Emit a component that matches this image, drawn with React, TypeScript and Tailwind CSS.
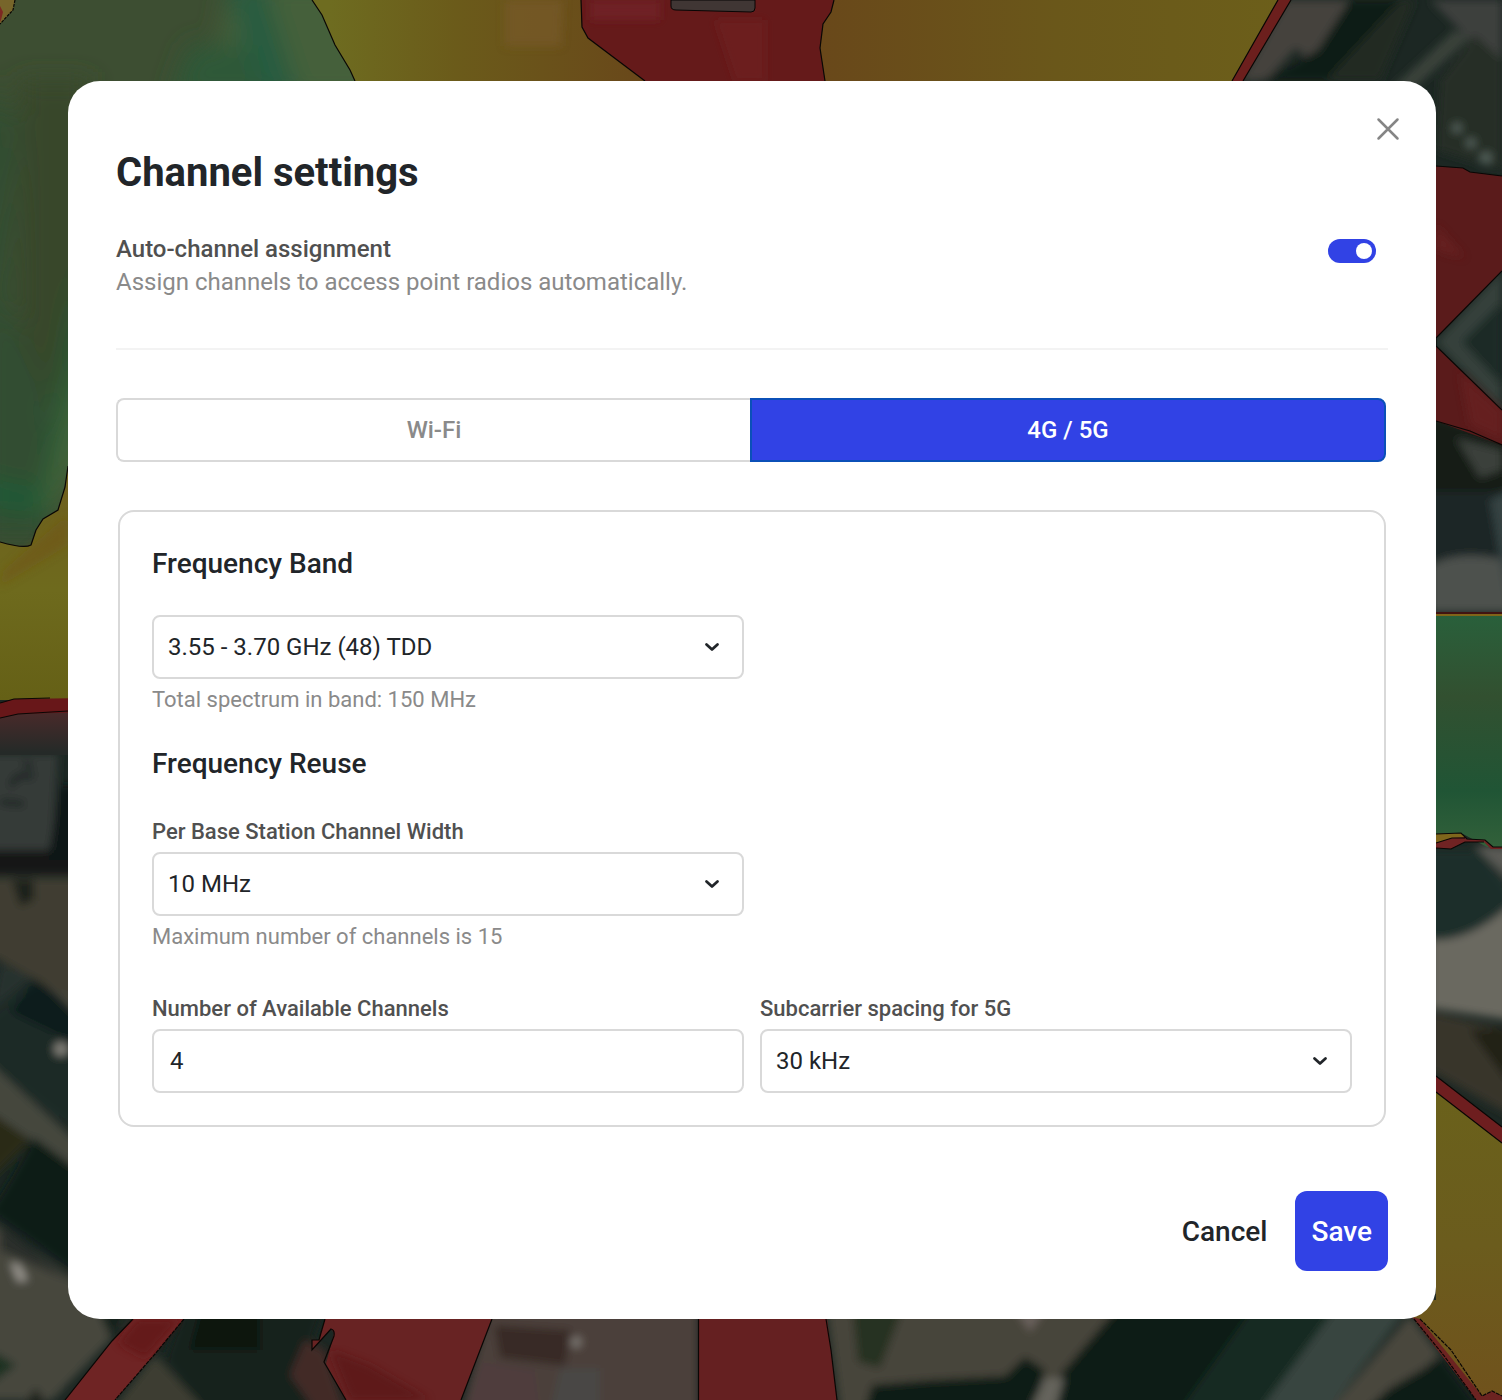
import { useState } from "react";
import type { ReactNode } from "react";

function CoverageMap() {
  return (
    <svg
      className="absolute inset-0 h-full w-full"
      viewBox="0 0 1502 1400"
      preserveAspectRatio="xMidYMid slice"
      aria-hidden="true"
    >
      <defs>
        <filter id="soft" x="-10%" y="-10%" width="120%" height="120%">
          <feGaussianBlur stdDeviation="4" />
        </filter>
        <filter id="haze" x="-20%" y="-20%" width="140%" height="140%">
          <feGaussianBlur stdDeviation="12" />
        </filter>
        <linearGradient id="ochreA" x1="330" x2="640" y1="0" y2="0" gradientUnits="userSpaceOnUse">
          <stop offset="0" stopColor="#6e6c20" />
          <stop offset="0.4" stopColor="#6b5b1a" />
          <stop offset="1" stopColor="#69481a" />
        </linearGradient>
        <linearGradient id="ochreB" x1="820" x2="1290" y1="0" y2="0" gradientUnits="userSpaceOnUse">
          <stop offset="0" stopColor="#69481a" />
          <stop offset="0.5" stopColor="#6a571a" />
          <stop offset="1" stopColor="#6c5f1a" />
        </linearGradient>
        <linearGradient id="leftYellow" x1="0" x2="0" y1="480" y2="700" gradientUnits="userSpaceOnUse">
          <stop offset="0" stopColor="#6e5f1d" />
          <stop offset="0.5" stopColor="#6e6a1d" />
          <stop offset="1" stopColor="#656016" />
        </linearGradient>
        <linearGradient id="fade" x1="0" x2="0" y1="710" y2="752" gradientUnits="userSpaceOnUse">
          <stop offset="0" stopColor="#4b2a2a" />
          <stop offset="1" stopColor="#252a28" />
        </linearGradient>
        <linearGradient id="rightGreen" x1="0" x2="0" y1="614" y2="850" gradientUnits="userSpaceOnUse">
          <stop offset="0" stopColor="#29603b" />
          <stop offset="0.35" stopColor="#325030" />
          <stop offset="0.75" stopColor="#205535" />
          <stop offset="1" stopColor="#33613a" />
        </linearGradient>
        <linearGradient id="rightYellow" x1="0" x2="0" y1="1090" y2="1400" gradientUnits="userSpaceOnUse">
          <stop offset="0" stopColor="#6a611b" />
          <stop offset="0.5" stopColor="#6b5c1d" />
          <stop offset="1" stopColor="#70521c" />
        </linearGradient>
        <clipPath id="greenClip">
          <path d="M0 0H312L322 15L335 45L350 70L355 81V300L68 466L65 487L58 510L43 519L36 530L31 545L24 547L0 542Z" />
        </clipPath>
      </defs>

      <rect width="1502" height="1400" fill="#1c2723" />

      <g filter="url(#soft)">
        <path d="M1286 0H1350L1310 62L1296 48L1266 81H1240Z" fill="#44433c" />
        <path d="M1350 0H1400L1330 81H1262L1318 50Z" fill="#101b18" />
        <path d="M1400 0H1415L1380 81H1325Z" fill="#222c24" />
        <path d="M1455 30L1470 38L1412 90H1390Z" fill="#3b423b" />
        <path d="M1430 0H1502V78L1480 50Z" fill="#3c3f3c" />
        <path d="M1440 80L1475 35L1502 60V170L1436 150Z" fill="#252e25" />
        <circle cx="1457" cy="128" r="5" fill="#53605a" />
        <circle cx="1471" cy="143" r="5" fill="#53605a" />
        <circle cx="1486" cy="158" r="6" fill="#53605a" />
        <path d="M1436 342L1502 270V412Z" fill="#35403b" />
        <path d="M1462 342L1502 302V385Z" fill="#1b2926" />
        <path d="M1430 415L1510 440V500H1430Z" fill="#131d18" />
        <path d="M1456 438L1502 450V470L1480 478Z" fill="#3a403a" />
        <path d="M1430 492H1510V560H1430Z" fill="#1b2728" />
        <path d="M1430 565Q1465 548 1510 562V612H1430Z" fill="#4d514d" />
        <path d="M1490 500L1510 490V610Z" fill="#354242" />
        <path d="M1430 850H1480L1510 890V930L1450 950H1430Z" fill="#1b2d2b" />
        <path d="M1475 846H1510V882Z" fill="#5a5a54" />
        <path d="M1430 940Q1470 942 1510 905V1020L1430 1008Z" fill="#6b6961" />
        <path d="M1430 1012L1510 1030V1115L1430 1070Z" fill="#39352c" />
        <path d="M1470 1030L1510 1028V1085Z" fill="#232419" />

        <path d="M-10 754H58L52 850H-10Z" fill="#353a38" />
        <path d="M-10 850H78V874H-10Z" fill="#121715" />
        <path d="M60 785H78V860H48Z" fill="#101916" />
        <path d="M10 786L18 776H34M0 802L24 804M24 762L32 768" stroke="#151d1c" strokeWidth="5" fill="none" />
        <path d="M-10 878H78V1010L40 982L-10 955Z" fill="#403c31" />
        <path d="M12 880H34V900L20 906Z" fill="#1d211a" />
        <path d="M0 963L32 978L-10 1012Z" fill="#26302f" />
        <path d="M36 980L78 1010V1135L-10 1065V1015Z" fill="#1a2926" />
        <path d="M36 980L78 1012V1045L10 1012Z" fill="#101f1b" />
        <path d="M46 984L78 1000V1016Z" fill="#45443b" />
        <circle cx="61" cy="1049" r="7" fill="#817f78" />
        <path d="M-10 1063L78 1142V1172L-10 1112Z" fill="#45463d" />
        <path d="M-10 1112L30 1140L-10 1180Z" fill="#2b2b18" />
        <path d="M34 1138L78 1170V1275L-10 1212L10 1180Z" fill="#101e19" />
        <path d="M-10 1222L68 1275L110 1319H130L52 1400H-10Z" fill="#46473d" />
        <path d="M0 1225L68 1280L0 1250Z" fill="#292f2b" />
        <path d="M10 1262L20 1265L28 1280L18 1282Z" fill="#96938c" />
        <path d="M-10 1350L16 1365L-10 1385Z" fill="#1c3024" />
        <path d="M20 1410L36 1388L50 1410Z" fill="#1d211c" />

        <path d="M98 1310H132L112 1340Z" fill="#14221e" />
        <path d="M185 1305H290L325 1305L300 1375L350 1410H205L165 1360Z" fill="#13221e" />
        <path d="M155 1355L205 1410H112Z" fill="#3c3d32" />
        <path d="M202 1305H260V1350L190 1350Z" fill="#0a1411" />
        <path d="M305 1340L325 1350L345 1410H315L290 1375Z" fill="#432b28" />
        <path d="M490 1305H698V1410H462Z" fill="#4b403a" />
        <path d="M494 1325L572 1330L565 1366L500 1358Z" fill="#392a26" />
        <path d="M482 1362L535 1372L540 1410H465Z" fill="#4f3e3e" />
        <path d="M560 1368H600V1410H550Z" fill="#484744" />
        <circle cx="576" cy="1342" r="6" fill="#77726d" />
        <path d="M826 1305H1120L1060 1410H840Z" fill="#46443a" />
        <path d="M852 1305H904L880 1368L858 1362Z" fill="#283023" />
        <path d="M872 1385L930 1380L1005 1376L1025 1357L1045 1370L1035 1410H865Z" fill="#101d19" />
        <path d="M1120 1305H1340L1265 1410H1050L1060 1375Z" fill="#0e1a17" />
        <path d="M1255 1305H1340L1270 1410H1180Z" fill="#192923" />
        <path d="M1015 1310H1045L1030 1332Z" fill="#69615b" />
        <path d="M1045 1378H1064L1055 1410H1030Z" fill="#65635b" />
        <path d="M1338 1305H1410L1360 1370L1330 1410H1260Z" fill="#394540" />
        <path d="M1410 1315L1440 1355L1375 1410H1330Z" fill="#4a473e" />
        <path d="M1442 1358L1482 1410H1365L1390 1388Z" fill="#101a17" />
      </g>

      <path d="M0 542L24 547L31 545L36 530L43 519L58 510L65 487L68 466H90V700H0Z" fill="url(#leftYellow)" />
      <g clipPath="url(#greenClip)">
        <rect width="360" height="550" fill="#3d4e32" />
        <g filter="url(#haze)">
          <path d="M230 -20L380 -20V100H210Z" fill="#44613a" />
          <path d="M190 45H260V100H170Z" fill="#2d5838" />
          <path d="M225 -20H262L300 100H262Z" fill="#265c3f" />
          <path d="M20 80H90V400H20Z" fill="#37472a" />
          <path d="M-20 80L18 120L5 300L50 400V540H-20Z" fill="#304d30" />
          <path d="M76 260L60 380L40 490L-20 475V505L45 515L80 400Z" fill="#1d5a36" />
          <path d="M80 350L90 440L55 510L42 515Z" fill="#45653a" />
        </g>
      </g>
      <path d="M312 0H581L582 27L588 38L645 81V110H355V81L350 70L335 45L322 15Z" fill="url(#ochreA)" />
      <g filter="url(#soft)">
        <path d="M505 0H563L561 46H505Z" fill="#77592a" opacity="0.7" />
        <path d="M978 25L986 35L983 47L976 43Z" fill="#7a632b" />
        <path d="M1210 24L1226 46L1216 58L1198 42Z" fill="#756829" opacity="0.7" />
        <path d="M4 570L68 515V545L0 586Z" fill="#70541c" opacity="0.5" />
      </g>
      <path d="M581 0H834L831 12L823 24L820 48L825 81V110H645V81L588 38L582 27Z" fill="#651a1a" />
      <g filter="url(#soft)">
        <path d="M590 0H660V20H590Z" fill="#742426" opacity="0.7" />
        <path d="M715 20H765V81H735Z" fill="#732425" opacity="0.5" />
      </g>
      <path d="M671 0V6Q671 10 676 10L751 12Q755 12 755 8V0Z" fill="#403634" stroke="#070504" />
      <path d="M834 0H1278L1232 81V110H825V81L820 48L823 24L831 12Z" fill="url(#ochreB)" />
      <path d="M1278 0H1291L1243 81H1232Z" fill="#6c1f1d" />
      <path d="M0 0H15L13 10L0 24Z" fill="#77652a" />
      <path d="M0 6L3 12L1 20L0 22Z" fill="#7d2922" />

      <path d="M0 710L12 706L68 711V755H0Z" fill="url(#fade)" />
      <path d="M0 703L14 699L90 698V712L18 714L0 718Z" fill="#681719" />

      <path d="M1430 166L1463 168L1470 172L1502 176V271L1436 338V346L1502 410V445L1436 421Z" fill="#5a1b1b" />
      <path d="M1436 225L1465 258L1436 250ZM1460 372L1502 410V440L1470 425Z" fill="#6a2222" opacity="0.7" filter="url(#soft)" />
      <path d="M1430 614H1502V847H1487L1463 834H1430Z" fill="url(#rightGreen)" />
      <path d="M1436 615H1502" stroke="#806519" strokeWidth="2" />
      <path d="M1436 613H1502" stroke="#401412" strokeWidth="2" />
      <path d="M1436 834L1461 833L1467 839L1485 840L1493 847H1502V849H1491L1484 842L1465 842L1451 849L1436 848Z" fill="#702323" />
      <path d="M1436 834L1461 833L1465 837L1452 838L1436 843Z" fill="#7f661c" />
      <path d="M1430 1087L1502 1143V1400H1481L1412 1316V1300H1436Z" fill="url(#rightYellow)" />
      <path d="M1436 1076L1502 1127V1143L1436 1092Z" fill="#6e1e1f" />
      <path d="M1412 1317L1420 1319L1445 1350L1482 1396L1492 1391L1502 1396V1400H1476Z" fill="#6c2321" />

      <path d="M133 1319H184L155 1354L115 1400H65L112 1341Z" fill="#6f2424" />
      <path d="M138 1319H180L145 1358L118 1343Z" fill="#611717" opacity="0.7" filter="url(#soft)" />
      <path d="M325 1319H492L461 1400H346L326 1364L334 1333L331 1329L312 1350V1340L319 1340Z" fill="#682323" />
      <path d="M330 1350L370 1365L430 1400H350Z" fill="#5a1719" opacity="0.7" filter="url(#soft)" />
      <path d="M699 1310H826L831 1350L837 1400H699Z" fill="#652021" />

      <g fill="none" stroke="#0a0705" strokeWidth="1.2">
        <path d="M312 0L322 15L335 45L350 70L355 81" />
        <path d="M581 0L582 27L588 38L645 81" />
        <path d="M834 0L831 12L823 24L820 48L825 81" />
        <path d="M1278 0L1232 81M1291 0L1243 81" />
        <path d="M15 0L13 10L0 24" strokeDasharray="3 1" />
        <path d="M68 466L65 487L58 510L43 519L36 530L31 545Q24 549 0 542" />
        <path d="M0 703L14 699L50 698M0 718L18 714L68 711" />
        <path d="M1436 166L1463 168L1470 172L1502 176M1502 271L1436 338V346L1502 410M1436 421L1470 431L1502 445" />
        <path d="M1436 834L1461 833L1467 839L1485 840L1493 847H1502M1436 843L1452 838L1465 838M1436 848L1451 849L1465 842H1484" />
        <path d="M1436 1076L1502 1127M1436 1092L1502 1143" />
        <path d="M1414 1319L1445 1357L1476 1400M1420 1319L1451 1350L1482 1396L1492 1391L1502 1396" strokeDasharray="4 1" />
        <path d="M133 1319L112 1341L65 1400" />
        <path d="M184 1319L155 1354L115 1400" strokeDasharray="4 1" />
        <path d="M325 1319L319 1340H312V1350L331 1329Q335 1330 334 1336L324 1362L346 1400M492 1319L461 1400M698.5 1319V1400M826 1319L831 1350L837 1400" />
      </g>
    </svg>
  );
}

function Chevron() {
  return (
    <svg
      className="pointer-events-none absolute top-5 right-5 size-6"
      viewBox="0 0 24 24"
      fill="none"
      stroke="#212529"
      strokeWidth="2.8"
      strokeLinecap="round"
      strokeLinejoin="round"
      aria-hidden="true"
    >
      <path d="m6.5 9.5 5.5 5 5.5-5" />
    </svg>
  );
}

type SelectFieldProps = { id: string; label?: string; ariaLabel?: string; options: string[]; hint?: string };

function SelectField({ id, label, ariaLabel, options, hint }: SelectFieldProps) {
  return (
    <div>
      {label && <FieldLabel htmlFor={id}>{label}</FieldLabel>}
      <div className="relative">
        <select
          id={id}
          aria-label={ariaLabel}
          className="block h-16 w-full appearance-none rounded-lg border-2 border-[#d9d9d9] bg-white pr-14 pl-[14px] text-2xl text-[#212529]"
        >
          {options.map((option) => (
            <option key={option}>{option}</option>
          ))}
        </select>
        <Chevron />
      </div>
      {hint && <p className="mt-[5px] text-[22px] leading-8 text-[#8a8a8a]">{hint}</p>}
    </div>
  );
}

function FieldLabel({ htmlFor, children }: { htmlFor: string; children: ReactNode }) {
  return (
    <label htmlFor={htmlFor} className="mb-1 block text-[22px] leading-8 font-medium text-[#505050]">
      {children}
    </label>
  );
}

export default function App() {
  const [auto, setAuto] = useState(true);
  const [tab, setTab] = useState("cell");
  const active = "border-[#0b50b8] bg-[#3142e5] text-white";
  const idle = "border-[#d9d9d9] bg-white text-[#8a8a8a]";

  return (
    <div className="relative min-h-screen overflow-hidden bg-[#1c2723] pt-[81px] pr-[66px] pb-[81px] pl-[68px] font-['Roboto',sans-serif] text-[#212529]">
      <CoverageMap />
      <div
        role="dialog"
        aria-modal="true"
        aria-labelledby="dialog-title"
        className="relative mx-auto max-w-[1368px] rounded-[32px] bg-white px-12 pt-16 pb-12"
      >
        <button type="button" aria-label="Close" className="absolute top-8 right-8 size-8">
          <svg viewBox="0 0 32 32" fill="none" stroke="#858585" strokeWidth="2.5" strokeLinecap="round">
            <path d="M6.5 6.5 25.5 25.5M25.5 6.5 6.5 25.5" />
          </svg>
        </button>

        <h1 id="dialog-title" className="text-[40px] leading-[56px] font-bold">
          Channel settings
        </h1>

        <div className="mt-8 flex items-start justify-between pr-3">
          <div>
            <label htmlFor="auto-channel" className="block text-2xl leading-8 font-medium text-[#505050]">
              Auto-channel assignment
            </label>
            <p className="text-2xl leading-[34px] text-[#8a8a8a]">
              Assign channels to access point radios automatically.
            </p>
          </div>
          <input
            id="auto-channel"
            type="checkbox"
            role="switch"
            checked={auto}
            onChange={(e) => setAuto(e.target.checked)}
            className="mt-[6px] h-6 w-12 shrink-0 appearance-none rounded-full bg-gray-400 p-1 before:block before:size-4 before:rounded-full before:bg-white checked:bg-[#3142e5] checked:before:ml-6"
          />
        </div>

        <hr className="mt-[49px] border-t-2 border-[#f3f3f3]" />

        <div role="tablist" className="mt-12 mr-[2px] grid h-16 grid-cols-[634fr_636fr] text-2xl font-medium">
          <button
            type="button"
            role="tab"
            aria-selected={tab === "wifi"}
            onClick={() => setTab("wifi")}
            className={`rounded-l-lg border-2 border-r-0 ${tab === "wifi" ? active : idle}`}
          >
            Wi-Fi
          </button>
          <button
            type="button"
            role="tab"
            aria-selected={tab === "cell"}
            onClick={() => setTab("cell")}
            className={`rounded-r-lg border-2 ${tab === "cell" ? active : idle}`}
          >
            4G / 5G
          </button>
        </div>

        <div className="mx-[2px] mt-12 rounded-2xl border-2 border-[#d9d9d9] px-8 pt-8 pb-8">
          <h2 className="text-[28px] leading-10 font-medium">Frequency Band</h2>
          <div className="mt-[31px] grid grid-cols-2 gap-x-4">
            <SelectField
              id="band"
              ariaLabel="Frequency Band"
              options={["3.55 - 3.70 GHz (48) TDD"]}
              hint="Total spectrum in band: 150 MHz"
            />
          </div>

          <h2 className="mt-7 text-[28px] leading-10 font-medium">Frequency Reuse</h2>
          <div className="mt-8 grid grid-cols-2 gap-x-4 gap-y-10">
            <SelectField
              id="width"
              label="Per Base Station Channel Width"
              options={["10 MHz"]}
              hint="Maximum number of channels is 15"
            />
            <div className="col-start-1">
              <FieldLabel htmlFor="channels">Number of Available Channels</FieldLabel>
              <input
                id="channels"
                type="text"
                inputMode="numeric"
                defaultValue="4"
                className="block h-16 w-full rounded-lg border-2 border-[#d9d9d9] bg-white px-4 text-2xl text-[#212529]"
              />
            </div>
            <SelectField id="spacing" label="Subcarrier spacing for 5G" options={["30 kHz"]} />
          </div>
        </div>

        <div className="mt-16 flex items-center justify-end gap-3 text-[28px] leading-10 font-medium">
          <button type="button" className="h-20 rounded-xl px-4 pt-0.5">
            Cancel
          </button>
          <button type="button" className="h-20 rounded-xl bg-[#3142e5] px-4 pt-0.5 text-white">
            Save
          </button>
        </div>
      </div>
    </div>
  );
}
